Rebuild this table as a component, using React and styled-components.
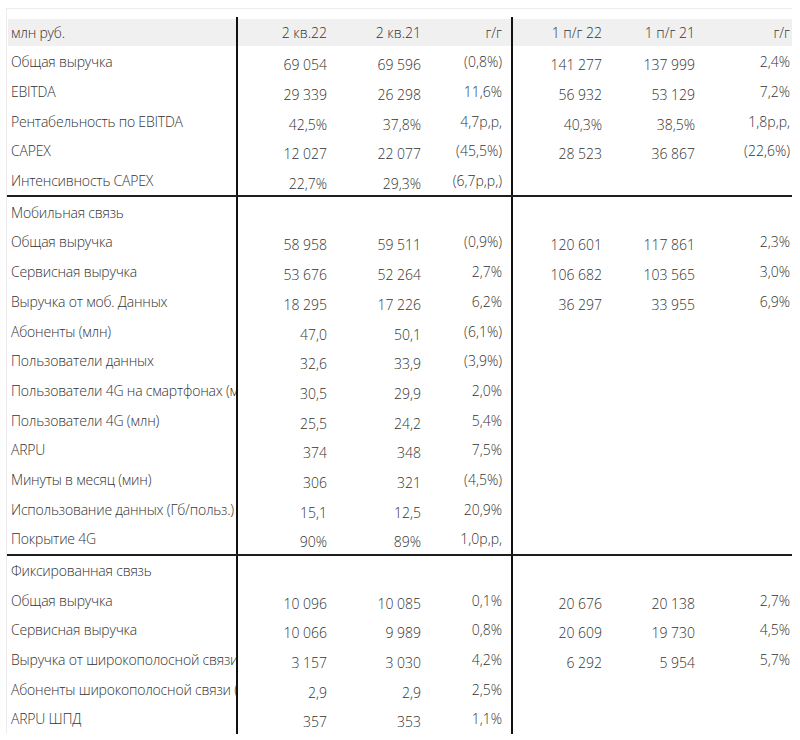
import React from "react";
import styled, { createGlobalStyle } from "styled-components";

const Global = createGlobalStyle`
  html, body { margin: 0; padding: 0; background: #fff; }
  body { font-family: "Open Sans", "Liberation Sans", sans-serif; }
`;

const COLS = "229px 95px 94px 86px 95px 93px 93px";

const Frame = styled.div`
  margin: 8px 0 0 6px;
  width: 786px;
  border-top: 1px solid #ececec;
  border-left: 1px solid #ececec;
  box-sizing: border-box;
  padding-top: 8px;
  font-family: "Open Sans", "Liberation Sans", sans-serif;
  font-weight: 300;
  font-size: 14px;
  color: #333;
`;

const Row = styled.div`
  display: grid;
  grid-template-columns: ${COLS};
  height: ${(p) => (p.$head ? "30px" : "29.7px")};
  background: ${(p) => (p.$head ? "#f0f0f0" : "transparent")};
  box-shadow: ${(p) =>
    p.$head ? "inset 0 2px 0 #fff, inset 0 -1px 0 #fff, inset 1px 0 0 #fff" : "none"};
`;

const Section = styled.div`
  border-top: ${(p) => (p.$first ? "none" : "2px solid #1e1e1e")};
`;

const Label = styled.div`
  display: flex;
  align-items: center;
  padding-left: 4px;
  white-space: nowrap;
  overflow: hidden;
  text-overflow: clip;
  letter-spacing: -0.2px;
`;

const Cell = styled.div`
  display: flex;
  align-items: center;
  justify-content: flex-end;
  white-space: nowrap;
  padding-right: ${(p) => p.$pr}px;
  padding-top: ${(p) => (p.$low ? 6 : 0)}px;
  border-left: ${(p) => (p.$edge ? "2px solid #111" : "none")};
  box-sizing: border-box;
`;

const colSpec = [
  { pr: 4, low: true, edge: true },
  { pr: 4, low: true },
  { pr: 9, low: false },
  { pr: 4, low: true, edge: true },
  { pr: 4, low: true },
  { pr: 2, low: false },
];

const header = ["млн руб.", "2 кв.22", "2 кв.21", "г/г", "1 п/г 22", "1 п/г 21", "г/г"];

const sections = [
  [
    ["Общая выручка", "69 054", "69 596", "(0,8%)", "141 277", "137 999", "2,4%"],
    ["EBITDA", "29 339", "26 298", "11,6%", "56 932", "53 129", "7,2%"],
    ["Рентабельность по EBITDA", "42,5%", "37,8%", "4,7р,р,", "40,3%", "38,5%", "1,8р,р,"],
    ["CAPEX", "12 027", "22 077", "(45,5%)", "28 523", "36 867", "(22,6%)"],
    ["Интенсивность CAPEX", "22,7%", "29,3%", "(6,7р,р,)", "", "", ""],
  ],
  [
    ["Мобильная связь", "", "", "", "", "", ""],
    ["Общая выручка", "58 958", "59 511", "(0,9%)", "120 601", "117 861", "2,3%"],
    ["Сервисная выручка", "53 676", "52 264", "2,7%", "106 682", "103 565", "3,0%"],
    ["Выручка от моб. Данных", "18 295", "17 226", "6,2%", "36 297", "33 955", "6,9%"],
    ["Абоненты (млн)", "47,0", "50,1", "(6,1%)", "", "", ""],
    ["Пользователи данных", "32,6", "33,9", "(3,9%)", "", "", ""],
    ["Пользователи 4G на смартфонах (млн)", "30,5", "29,9", "2,0%", "", "", ""],
    ["Пользователи 4G (млн)", "25,5", "24,2", "5,4%", "", "", ""],
    ["ARPU", "374", "348", "7,5%", "", "", ""],
    ["Минуты в месяц (мин)", "306", "321", "(4,5%)", "", "", ""],
    ["Использование данных (Гб/польз.)", "15,1", "12,5", "20,9%", "", "", ""],
    ["Покрытие 4G", "90%", "89%", "1,0р,р,", "", "", ""],
  ],
  [
    ["Фиксированная связь", "", "", "", "", "", ""],
    ["Общая выручка", "10 096", "10 085", "0,1%", "20 676", "20 138", "2,7%"],
    ["Сервисная выручка", "10 066", "9 989", "0,8%", "20 609", "19 730", "4,5%"],
    ["Выручка от широкополосной связи", "3 157", "3 030", "4,2%", "6 292", "5 954", "5,7%"],
    ["Абоненты широкополосной связи (млн)", "2,9", "2,9", "2,5%", "", "", ""],
    ["ARPU ШПД", "357", "353", "1,1%", "", "", ""],
  ],
];

function DataRow({ cells, head }) {
  const [label, ...vals] = cells;
  return (
    <Row $head={head}>
      <Label>{label}</Label>
      {vals.map((v, i) => (
        <Cell key={i} $pr={colSpec[i].pr} $low={!head && colSpec[i].low} $edge={colSpec[i].edge}>
          {v}
        </Cell>
      ))}
    </Row>
  );
}

export default function App() {
  return (
    <>
      <Global />
      <Frame>
        <DataRow cells={header} head />
        {sections.map((rows, si) => (
          <Section key={si} $first={si === 0}>
            {rows.map((r, ri) => (
              <DataRow key={ri} cells={r} />
            ))}
          </Section>
        ))}
      </Frame>
    </>
  );
}
